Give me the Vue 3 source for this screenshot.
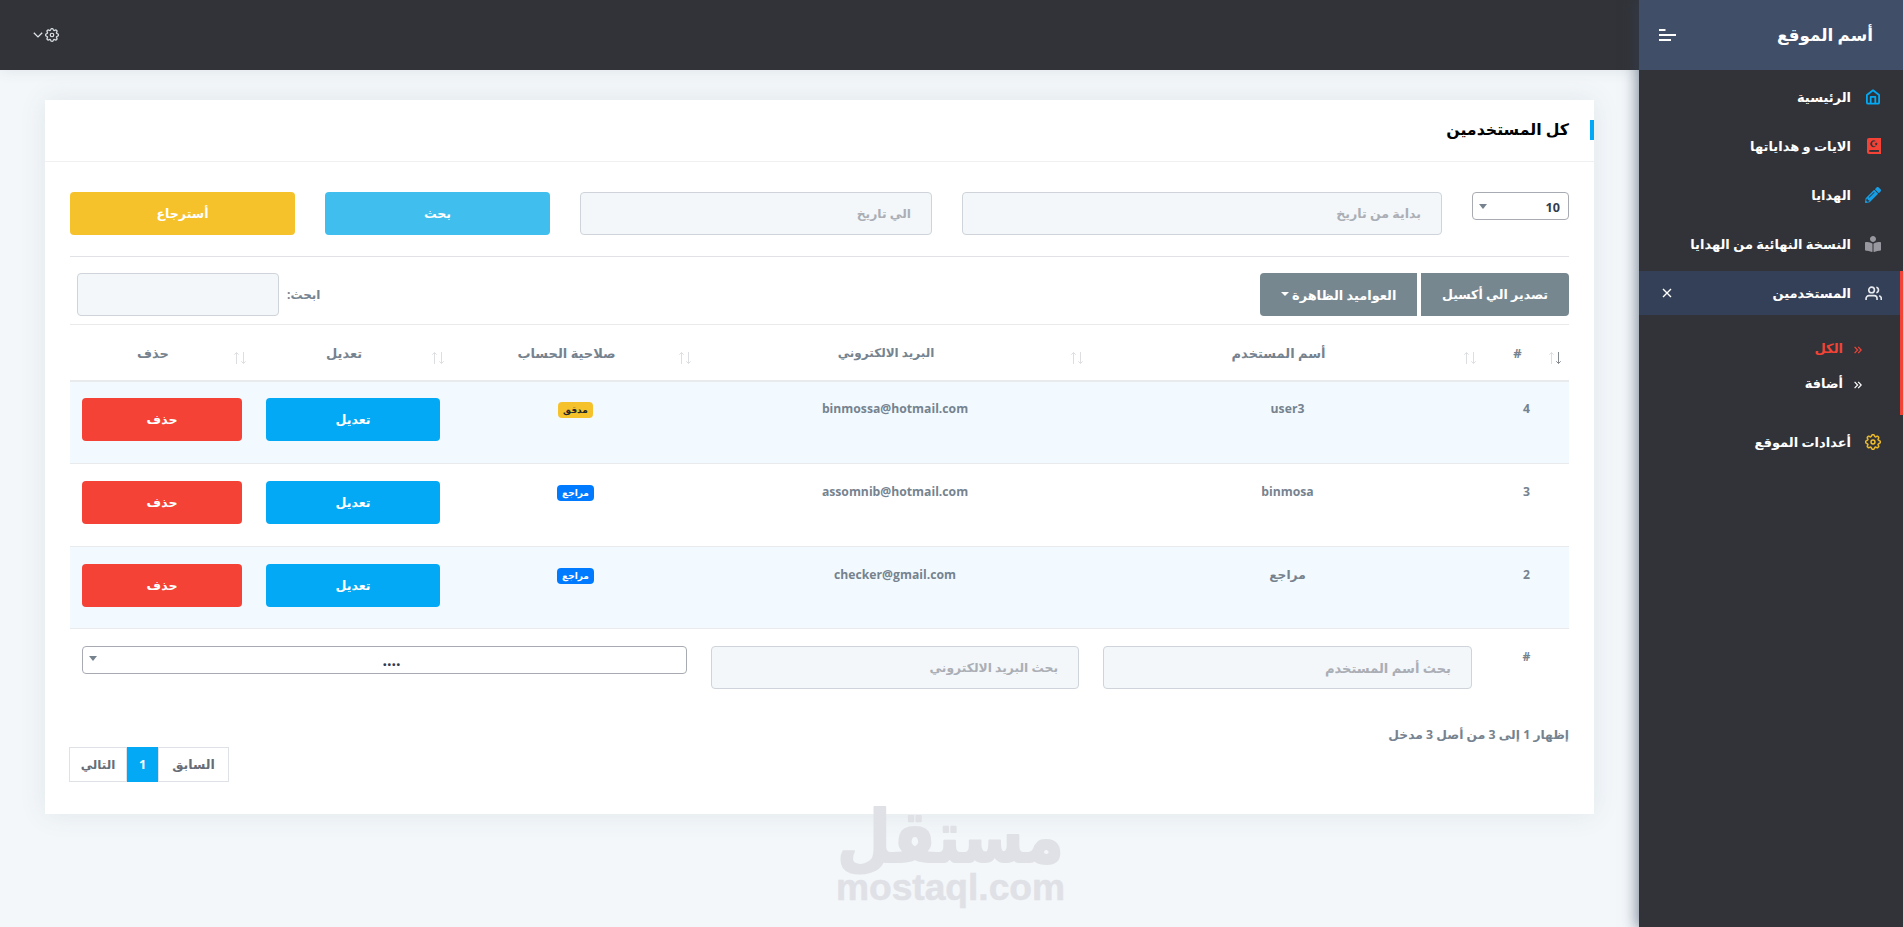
<script setup>
import { ref } from 'vue'

const menuItems = [
  { id: 1, title: 'الرئيسية', icon: 'home' },
  { id: 2, title: 'الايات و هداياتها', icon: 'quran' },
  { id: 3, title: 'الهدايا', icon: 'pencil' },
  { id: 4, title: 'النسخة النهائية من الهدايا', icon: 'reader' }
]

const subItems = [
  { id: 1, title: 'الكل' },
  { id: 2, title: 'أضافة' }
]
const activeSub = ref(1)

const columns = ['#', 'أسم المستخدم', 'البريد الالكتروني', 'صلاحية الحساب', 'تعديل', 'حذف']

const users = ref([
  { id: 4, name: 'user3', email: 'binmossa@hotmail.com', role: 'مدقق', badge: 'warning' },
  { id: 3, name: 'binmosa', email: 'assomnib@hotmail.com', role: 'مراجع', badge: 'primary' },
  { id: 2, name: 'مراجع', email: 'checker@gmail.com', role: 'مراجع', badge: 'primary' }
])

const gearPath =
  'M9.796 1.343c-.527-1.79-3.065-1.79-3.592 0l-.094.319a.873.873 0 0 1-1.255.52l-.292-.16c-1.64-.892-3.433.902-2.54 2.541l.159.292a.873.873 0 0 1-.52 1.255l-.319.094c-1.79.527-1.79 3.065 0 3.592l.319.094a.873.873 0 0 1 .52 1.255l-.16.292c-.892 1.64.901 3.434 2.541 2.54l.292-.159a.873.873 0 0 1 1.255.52l.094.319c.527 1.79 3.065 1.79 3.592 0l.094-.319a.873.873 0 0 1 1.255-.52l.292.16c1.64.893 3.434-.902 2.54-2.541l-.159-.292a.873.873 0 0 1 .52-1.255l.319-.094c1.79-.527 1.79-3.065 0-3.592l-.319-.094a.873.873 0 0 1-.52-1.255l.16-.292c.893-1.64-.902-3.433-2.541-2.54l-.292.159a.873.873 0 0 1-1.255-.52l-.094-.319zm-2.633.283c.246-.835 1.428-.835 1.674 0l.094.319a1.873 1.873 0 0 0 2.693 1.115l.291-.16c.764-.415 1.6.42 1.184 1.185l-.159.292a1.873 1.873 0 0 0 1.116 2.692l.318.094c.835.246.835 1.428 0 1.674l-.319.094a1.873 1.873 0 0 0-1.115 2.693l.16.291c.415.764-.42 1.6-1.185 1.184l-.291-.159a1.873 1.873 0 0 0-2.693 1.116l-.094.318c-.246.835-1.428.835-1.674 0l-.094-.319a1.873 1.873 0 0 0-2.692-1.115l-.292.16c-.764.415-1.6-.42-1.184-1.185l.159-.291A1.873 1.873 0 0 0 1.945 8.93l-.319-.094c-.835-.246-.835-1.428 0-1.674l.319-.094A1.873 1.873 0 0 0 3.06 4.377l-.16-.292c-.415-.764.42-1.6 1.185-1.184l.292.159a1.873 1.873 0 0 0 2.692-1.115l.094-.319z'
</script>

<template>
  <div class="layout" dir="rtl">
    <aside class="sidebar">
      <div class="sidebar__brand">
        <h1 class="sidebar__title">أسم الموقع</h1>
        <svg class="sidebar__toggle" viewBox="0 0 17 12" width="17" height="12">
          <path d="M0 1h6.500M0 6h17M0 11h12" fill="none" stroke="#fff" stroke-width="2" />
        </svg>
      </div>
      <ul class="menu">
        <li v-for="item in menuItems" :key="item.id" class="menu__item">
          <span class="menu__icon">
            <svg v-if="item.icon === 'home'" viewBox="0 0 16 16" width="16" height="16">
              <path d="M1.900 6L8 1.300 14.100 6v7.400a1.300 1.300 0 0 1-1.300 1.300H3.200a1.300 1.300 0 0 1-1.300-1.300zM5.700 14.500V7.800h4.600v6.700" fill="none" stroke="#03a9f4" stroke-width="1.800" stroke-linejoin="round" />
            </svg>
            <svg v-if="item.icon === 'quran'" viewBox="0 0 16 16" width="16" height="16">
              <path d="M4 0h12v16H4a2 2 0 0 1-2-2V2a2 2 0 0 1 2-2z" fill="#f44336" />
              <path d="M4.300 12h9.700v1.900H4.300z" fill="#323338" />
              <path d="M10.400 3.100a3.200 3.200 0 1 0 0 5.400 2.800 2.800 0 1 1 0-5.400z" fill="#323338" stroke="#323338" stroke-width=".4" />
              <path d="M11.200 4.300l.5 1 1.100.2-.8.800.2 1.100-1-.5-1 .5.200-1.100-.8-.8 1.100-.2z" fill="#323338" />
            </svg>
            <svg v-if="item.icon === 'pencil'" viewBox="0 0 512 512" width="16" height="16">
              <path d="M497.900 142.100l-46.100 46.100c-4.700 4.700-12.300 4.700-17 0l-111-111c-4.700-4.700-4.700-12.300 0-17l46.100-46.100c18.700-18.700 49.100-18.700 67.900 0l60.100 60.100c18.800 18.700 18.800 49.100 0 67.900zM284.200 99.800L21.600 362.400.4 483.900c-2.900 16.400 11.400 30.600 27.800 27.800l121.500-21.300 262.600-262.600c4.700-4.700 4.700-12.300 0-17l-111-111c-4.800-4.700-12.400-4.700-17.100 0zM124.100 339.900c-5.500-5.500-5.500-14.300 0-19.800l154-154c5.500-5.500 14.300-5.500 19.800 0s5.500 14.300 0 19.800l-154 154c-5.500 5.500-14.300 5.500-19.800 0zM88 424h48v36.300l-64.500 11.300-31.100-31.100L51.700 376H88v48z" fill="#169fe6" />
            </svg>
            <svg v-if="item.icon === 'reader'" viewBox="0 0 512 512" width="16" height="16">
              <path d="M352 96c0-53.020-42.980-96-96-96s-96 42.980-96 96 42.980 96 96 96 96-42.980 96-96zM233.590 241.100c-59.330-36.320-155.430-46.300-203.790-49.050C13.550 191.130 0 203.510 0 219.140v222.800c0 14.330 11.590 26.280 26.490 27.050 43.660 2.290 131.990 10.680 193.040 41.430 9.370 4.720 20.480-1.710 20.480-11.870V252.560c-.010-4.670-2.320-8.950-6.420-11.460zm248.610-49.050c-48.350 2.740-144.460 12.730-203.780 49.050-4.100 2.510-6.410 6.960-6.410 11.630v245.790c0 10.190 11.140 16.630 20.540 11.900 61.040-30.720 149.320-39.110 192.970-41.400 14.900-.780 26.490-12.730 26.490-27.060V219.140c-.010-15.630-13.560-28.010-29.810-27.090z" fill="#98979f" />
            </svg>
          </span>
          <span class="menu__text">{{ item.title }}</span>
        </li>
        <li class="menu__group">
          <div class="menu__item menu__item--active">
            <span class="menu__icon">
              <svg viewBox="0 0 24 24" width="17" height="17" fill="none" stroke="#e6e9ee" stroke-width="2.300">
                <path d="M17 21v-2a4 4 0 0 0-4-4H5.500a4 4 0 0 0-4 4v2M23 21v-2a4 4 0 0 0-3-3.870M16 3.130a4 4 0 0 1 0 7.750" />
                <circle cx="9.300" cy="7" r="4" />
              </svg>
            </span>
            <span class="menu__text">المستخدمين</span>
            <svg class="menu__close" viewBox="0 0 10 10" width="10" height="10">
              <path d="M1 1l8 8M9 1L1 9" stroke="#fff" stroke-width="1.400" />
            </svg>
          </div>
          <ul class="submenu">
            <li
              v-for="sub in subItems"
              :key="sub.id"
              class="submenu__item"
              :class="{ active: activeSub === sub.id }"
              @click="activeSub = sub.id"
            >
              <svg class="submenu__arrow" viewBox="0 0 8 8" width="8" height="8">
                <path d="M.6.800L3.600 4 .6 7.200M4.200.800L7.200 4l-3 3.200" fill="none" stroke="currentColor" stroke-width="1.200" />
              </svg>
              <span>{{ sub.title }}</span>
            </li>
          </ul>
        </li>
        <li class="menu__item">
          <span class="menu__icon">
            <svg viewBox="0 0 16 16" width="16" height="16">
              <path :d="gearPath" fill="#f6c22c" stroke="#f6c22c" stroke-width=".5" />
              <circle cx="8" cy="8" r="2" fill="none" stroke="#f6c22c" stroke-width="1.400" />
            </svg>
          </span>
          <span class="menu__text">أعدادات الموقع</span>
        </li>
      </ul>
    </aside>

    <div class="page">
      <header class="topbar">
        <svg viewBox="0 0 16 16" width="14" height="14">
          <path :d="gearPath" fill="#dde3e8" stroke="#dde3e8" stroke-width=".5" />
          <circle cx="8" cy="8" r="2" fill="none" stroke="#dde3e8" stroke-width="1.400" />
        </svg>
        <svg viewBox="0 0 10 6" width="10" height="6">
          <path d="M.8.700L5 4.900 9.200.700" fill="none" stroke="#dde3e8" stroke-width="1.300" />
        </svg>
      </header>

      <main class="card">
        <div class="card__header">
          <h2 class="card__title">كل المستخدمين</h2>
        </div>
        <div class="card__body">
          <div class="filters">
            <div class="select select--length">
              <span>10</span>
              <i class="caret"></i>
            </div>
            <input class="field field--from" type="text" placeholder="بداية من تاريخ" />
            <input class="field field--to" type="text" placeholder="الي تاريخ" />
            <button class="btn btn--search">بحث</button>
            <button class="btn btn--reset">أسترجاع</button>
          </div>

          <div class="toolbar">
            <div class="toolbar__buttons">
              <button class="btn btn--export">تصدير الي أكسيل</button>
              <button class="btn btn--columns">العواميد الظاهرة <i class="btn__caret"></i></button>
            </div>
            <label class="toolbar__search">
              <span>ابحث:</span>
              <input class="field" type="text" />
            </label>
          </div>

          <div class="table">
            <div class="table__row table__head">
              <div v-for="(column, index) in columns" :key="column" class="table__th">
                <svg class="sort" viewBox="0 0 12 12" width="12" height="12">
                  <path d="M2.500 12V.5M.3 2.700L2.500.5l2.200 2.200" fill="none" stroke="#dcdee1" />
                  <path d="M9.500 0v11.500M7.300 9.300l2.200 2.200 2.200-2.200" fill="none" :stroke="index === 0 ? '#84888f' : '#dcdee1'" />
                </svg>
                {{ column }}
              </div>
            </div>
            <div v-for="user in users" :key="user.id" class="table__row table__user">
              <div class="table__td">{{ user.id }}</div>
              <div class="table__td"><bdi>{{ user.name }}</bdi></div>
              <div class="table__td table__td--email">{{ user.email }}</div>
              <div class="table__td">
                <span class="badge" :class="'badge--' + user.badge">{{ user.role }}</span>
              </div>
              <div class="table__action"><button class="btn btn--edit">تعديل</button></div>
              <div class="table__action"><button class="btn btn--delete">حذف</button></div>
            </div>
            <div class="table__row table__foot">
              <div class="table__td">#</div>
              <div class="table__action"><input class="field field--name" type="text" placeholder="بحث أسم المستخدم" /></div>
              <div class="table__action"><input class="field" type="text" placeholder="بحث البريد الالكتروني" /></div>
              <div class="table__action table__action--wide">
                <div class="select select--role">
                  <span>....</span>
                  <i class="caret"></i>
                </div>
              </div>
            </div>
          </div>

          <p class="info">إظهار 1 إلى 3 من أصل 3 مدخل</p>
          <div class="pagination">
            <a class="pagination__prev">السابق</a>
            <a class="pagination__page">1</a>
            <a class="pagination__next">التالي</a>
          </div>
        </div>
      </main>
    </div>

    <!-- site mark laid over the page bottom -->
    <svg class="watermark" viewBox="0 0 260 147" width="260" height="147" direction="ltr">
      <text class="watermark__ar" x="16" y="83" textLength="227" lengthAdjust="spacingAndGlyphs">مستقل</text>
      <text class="watermark__en" x="15" y="121" textLength="229" lengthAdjust="spacingAndGlyphs">mostaql.com</text>
    </svg>
  </div>
</template>

<style>
body {
  background-color: #f3f7fa;
  overflow: hidden;
}
</style>

<style scoped>
* {
  box-sizing: border-box;
}
.layout {
  display: flex;
  width: 100%;
  height: 927px;
  position: relative;
  overflow: hidden;
  background-color: #f3f7fa;
  color: #76838f;
  font-family: 'Open Sans', 'DejaVu Sans', sans-serif;
  font-size: 12.6px;
  font-weight: 700;
}
h1, h2, p, ul {
  margin: 0;
  padding: 0;
}
ul {
  list-style: none;
}
svg {
  display: block;
  flex: none;
}
button, input {
  font: inherit;
}

/* sidebar */
.sidebar {
  width: 264px;
  flex: none;
  height: 100%;
  background-color: #323338;
  box-shadow: 0 0 14px 2px rgba(50, 64, 88, 0.6);
  color: #fff;
  z-index: 2;
}
.sidebar__brand {
  height: 70px;
  display: flex;
  align-items: center;
  justify-content: space-between;
  padding: 0 30px 0 20px;
  background-color: #404e67;
}
.sidebar__title {
  font-size: 16.8px;
  line-height: 24px;
}
.menu {
  padding-top: 5px;
  font-size: 13px;
}
.menu__item {
  height: 44px;
  margin-bottom: 5px;
  padding: 0 20px 0 23px;
  display: flex;
  align-items: center;
}
.menu__icon {
  width: 20px;
  margin-left: 12px;
  display: flex;
  justify-content: center;
}
.menu__text {
  flex: 1;
  padding-bottom: 1px;
  white-space: nowrap;
}
.menu__group {
  height: 144px;
  border-right: 3px solid #f44336;
  margin-bottom: 5px;
}
.menu__item--active {
  padding-right: 17px;
  margin: 0;
  background-color: #344058;
}
.submenu {
  padding: 15px 38px 0 0;
}
.submenu__item {
  height: 35px;
  display: flex;
  align-items: center;
  cursor: pointer;
}
.submenu__arrow {
  margin-left: 11px;
  margin-top: 5px;
}
.submenu__item.active {
  color: #f44336;
}

/* page */
.page {
  flex: 1;
  min-width: 0;
}
.topbar {
  height: 70px;
  display: flex;
  align-items: center;
  justify-content: flex-end;
  gap: 2px;
  padding-left: 33px;
  background-color: #323338;
  box-shadow: 0 0 14px rgba(69, 90, 100, 0.12);
}
.card {
  margin: 30px 45px 0;
  height: 714px;
  background-color: #fff;
  box-shadow: 0 0 25px rgba(69, 90, 100, 0.1);
}
.card__header {
  height: 62px;
  padding: 20px 0 0;
  border-bottom: 1px solid #eef0f2;
}
.card__title {
  height: 20px;
  padding-right: 21px;
  border-right: 4px solid #03a9f4;
  color: #000;
  font-size: 15.8px;
  line-height: 19px;
}
.card__body {
  padding: 30px 25px 0;
}
.filters {
  display: flex;
  align-items: flex-start;
  gap: 30px;
  height: 65px;
  border-bottom: 1px solid #e0e2e5;
}
.field {
  display: block;
  width: 100%;
  height: 43px;
  padding: 0 20px;
  border: 1px solid #ced4da;
  border-radius: 4px;
  background-color: #f3f7fa;
  outline: none;
  color: #76838f;
  font-size: 12.3px;
}
.field::placeholder {
  color: #abaeb5;
  opacity: 1;
}
.field--from {
  width: 480px;
  font-size: 12.6px;
}
.field--to {
  width: 352px;
}
.field--name {
  font-size: 13.1px;
}
.select {
  height: 28px;
  display: flex;
  align-items: center;
  justify-content: space-between;
  border: 1px solid #a9abb3;
  border-radius: 4px;
  background-color: #fff;
  color: #333c4e;
}
.select--length {
  width: 97px;
  padding: 3px 8px 0 6px;
}
.caret {
  border: 4px solid transparent;
  border-top: 5px solid #76838f;
  border-bottom: 0;
  margin-top: -3px;
}
.btn {
  height: 43px;
  padding: 0;
  border: 0;
  border-radius: 4px;
  color: #fff;
  text-align: center;
}
.btn--search {
  width: 225px;
  background-color: #40beed;
}
.btn--reset {
  width: 225px;
  background-color: #f6c22c;
}
.toolbar {
  display: flex;
  justify-content: space-between;
  padding: 16px 0 8px 7px;
}
.toolbar__buttons {
  display: flex;
  gap: 4px;
}
.btn--export {
  width: 148px;
  border-radius: 0 4px 4px 0;
  background-color: #76878f;
}
.btn--columns {
  width: 157px;
  border-radius: 4px 0 0 4px;
  background-color: #76878f;
  font-size: 12.9px;
}
.btn__caret {
  display: inline-block;
  border: 4px solid transparent;
  border-top-color: #fff;
  border-bottom: 0;
  vertical-align: 4px;
}
.toolbar__search {
  display: flex;
  align-items: center;
  gap: 8px;
  font-size: 12px;
}
.toolbar__search .field {
  width: 202px;
}

/* table */
.table__row {
  display: grid;
  grid-template-columns: 85px 393px 392px 247px 198px 184px;
}
.table__head {
  height: 58px;
  border-top: 1px solid #e8eaec;
  border-bottom: 2px solid #e8eaec;
}
.table__th {
  position: relative;
  padding: 19px 30px 0 12px;
  text-align: center;
  font-size: 13px;
  line-height: 18px;
}
.table__th:nth-child(3) {
  font-size: 12px;
}
.sort {
  position: absolute;
  right: 8px;
  top: 27px;
}
.table__user {
  height: 83px;
  padding-top: 17px;
  border-top: 1px solid #e8eaec;
}
.table__user:nth-child(2) {
  height: 81px;
  padding-top: 16px;
  border-top: 0;
}
.table__user:nth-child(4) {
  height: 82px;
}
.table__user:nth-child(even) {
  background-color: #f2faff;
}
.table__td {
  padding-top: 2px;
  text-align: center;
  font-size: 12.2px;
  line-height: 18px;
}
.table__td--email {
  direction: ltr;
}
.table__action {
  padding: 0 12px;
}
.table__action .btn {
  width: 100%;
}
.btn--edit {
  background-color: #03a9f4;
}
.btn--delete {
  background-color: #f44336;
}
.badge {
  display: inline-block;
  height: 16px;
  padding: 0 5px;
  border-radius: 4px;
  font-size: 9px;
  line-height: 16px;
}
.badge--warning {
  background-color: #f6c22c;
  color: #212529;
}
.badge--primary {
  background-color: #007bff;
  color: #fff;
}
.table__foot {
  height: 92px;
  padding-top: 17px;
  border-top: 1px solid #e8eaec;
}
.table__action--wide {
  grid-column: span 3;
}
.select--role {
  padding: 0 0 0 6px;
}
.select--role span {
  flex: 1;
  text-align: center;
  font-size: 16px;
}
.info {
  padding-top: 5px;
  font-size: 12.3px;
  line-height: 20px;
}
.pagination {
  display: flex;
  justify-content: flex-end;
  margin: 2px 0 0 -1px;
}
.pagination a {
  height: 35px;
  border: 1px solid #dee2e6;
  display: flex;
  align-items: center;
  justify-content: center;
  color: #676d76;
}
.pagination .pagination__prev {
  width: 71px;
}
.pagination .pagination__page {
  width: 31px;
  border-color: #03a9f4;
  background-color: #03a9f4;
  color: #fff;
}
.pagination .pagination__next {
  width: 58px;
  font-size: 12px;
}

.watermark {
  position: absolute;
  left: 821px;
  top: 779px;
  fill: #e0e1e6;
  stroke: #e0e1e6;
  stroke-linejoin: round;
}
.watermark__ar {
  font-family: 'DejaVu Sans', sans-serif;
  font-size: 72px;
  stroke-width: 2px;
}
.watermark__en {
  font-family: 'Liberation Sans', Arial, sans-serif;
  font-size: 37px;
  stroke-width: 0.5px;
}
</style>
